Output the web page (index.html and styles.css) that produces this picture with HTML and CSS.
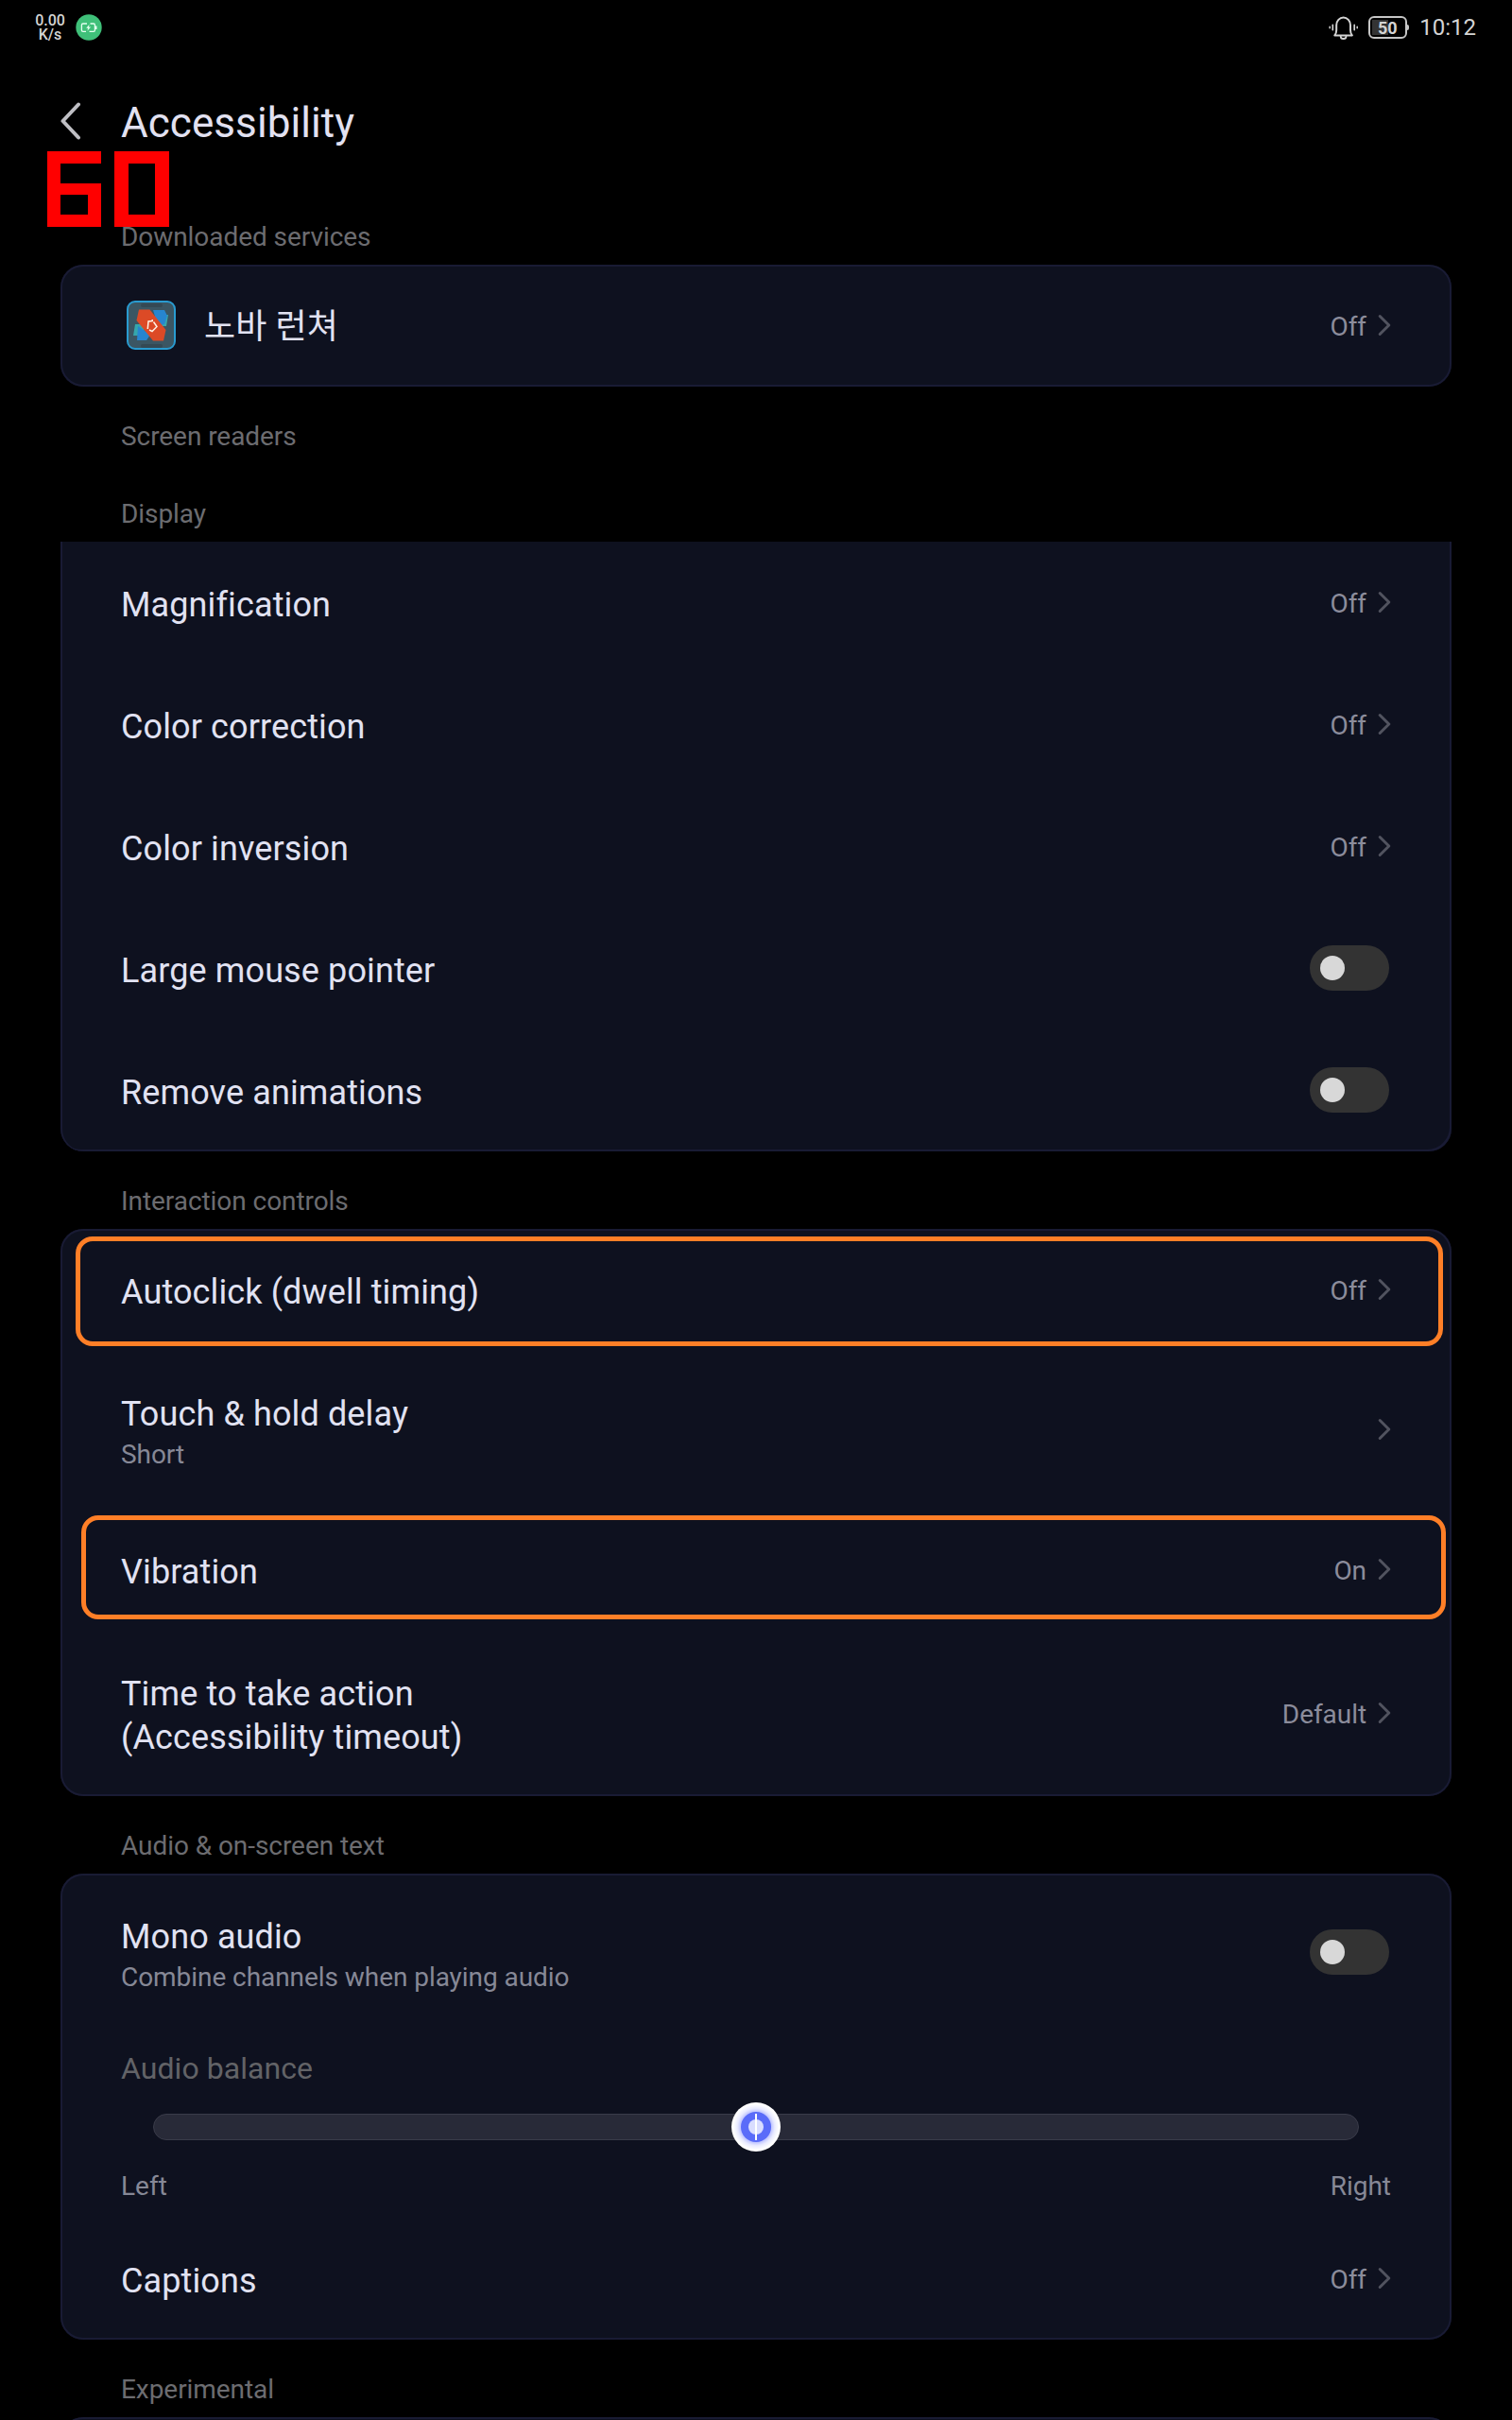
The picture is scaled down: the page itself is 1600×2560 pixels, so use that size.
FILE: index.html
```html
<!DOCTYPE html>
<html lang="en">
<head>
<meta charset="utf-8">
<title>Accessibility</title>
<link rel="stylesheet" href="styles.css">
</head>
<body>
<svg class="symbols" aria-hidden="true">
  <symbol id="chevron" viewBox="0 0 14 24"><path d="M2.2 2.5 11.8 12 2.2 21.5" fill="none" stroke="currentColor" stroke-width="3" stroke-linecap="round" stroke-linejoin="round"/></symbol>
</svg>
<div class="screen">
  <div class="status-bar">
    <div class="status-left">
      <div class="net-speed"><span>0.00</span><span>K/s</span></div>
      <svg class="charge-badge" viewBox="0 0 28 28">
        <circle cx="14" cy="14" r="13.7" fill="#3fc079"/>
        <path d="M12 10H8Q6.400 10 6.400 11.500V17Q6.400 18.400 8 18.400H11M15.500 10H19Q20.400 10 20.400 11.500V17Q20.400 18.400 19 18.400H14.500" fill="none" stroke="#e4fff0" stroke-width="1.300"/>
        <path d="M21 12.400h1.500v3.700H21z" fill="#e4fff0"/>
        <path d="M14.600 10.800 11.200 14.700h2l-.8 3 3.700-4.100h-2.200z" fill="#e4fff0"/>
      </svg>
    </div>
    <div class="status-right">
      <svg class="bell" viewBox="0 0 32 28" fill="none" stroke="#d4d4d4" stroke-linecap="round">
        <path d="M6.300 22.400Q8.200 20.500 8.200 17V11.500A7.400 8 0 0 1 23 11.500V17Q23 20.500 24.900 22.400Z" stroke-width="2" stroke-linejoin="round"/>
        <path d="M12.700 23.400a2.900 2.600 0 0 0 5.800 0" stroke-width="1.800"/>
        <path d="M4.300 11.400v5.200M27.200 11.400v5.200" stroke-width="1.700"/>
        <path d="M1.200 13.300v1.500M30.200 13.300v1.500" stroke-width="1.500"/>
      </svg>
      <div class="battery">50</div>
      <div class="clock">10:12</div>
    </div>
  </div>

  <header class="app-bar">
    <svg class="back" viewBox="0 0 24 40"><path d="M20 2.500 3.500 20 20 37.500" fill="none" stroke="#bfbfc4" stroke-width="4" stroke-linecap="round" stroke-linejoin="round"/></svg>
    <h1>Accessibility</h1>
    <div class="fps"><span class="digit six">6</span><span class="digit zero">0</span></div>
  </header>

  <h2>Downloaded services</h2>
  <section class="card">
    <div class="row service">
      <svg class="nova" viewBox="0 0 52 52">
        <rect x="1" y="1" width="50" height="50" rx="8" fill="#3b5663" stroke="#299bd0" stroke-width="2"/>
        <rect x="15" y="3" width="23" height="4" rx="2" fill="#344954"/><rect x="15" y="46" width="23" height="4" rx="2" fill="#344954"/>
        <path d="M36 15h8l-2 12h-7zM9 25h8l3 12H7z" fill="#35a6ac"/>
        <path d="M28 10h12l3 6-3 9-7 2zM12 27l13 9-4 6H11z" fill="#2785cf"/>
        <path d="M13 9.500h11.500L41.500 31l-2.500 11.500H28L10.500 21z" fill="#dc4a26"/>
        <path d="M22.300 30 23 22l4.200-.5V20M28.500 22.500 32 27.500 27 32.500l-3-1.500" fill="none" stroke="#fff1e4" stroke-width="1.500"/>
      </svg>
      <div class="label">노바 런쳐</div><div class="value">Off</div><svg class="chev"><use href="#chevron"/></svg>
    </div>
  </section>

  <h2>Screen readers</h2>
  <h2>Display</h2>
  <section class="card open-top">
    <div class="row"><div class="label">Magnification</div><div class="value">Off</div><svg class="chev"><use href="#chevron"/></svg></div>
    <div class="row"><div class="label">Color correction</div><div class="value">Off</div><svg class="chev"><use href="#chevron"/></svg></div>
    <div class="row"><div class="label">Color inversion</div><div class="value">Off</div><svg class="chev"><use href="#chevron"/></svg></div>
    <div class="row"><div class="label">Large mouse pointer</div><div class="toggle"></div></div>
    <div class="row"><div class="label">Remove animations</div><div class="toggle"></div></div>
  </section>

  <h2>Interaction controls</h2>
  <section class="card">
    <div class="row"><div class="label">Autoclick (dwell timing)</div><div class="value">Off</div><svg class="chev"><use href="#chevron"/></svg><div class="mark mark-autoclick"></div></div>
    <div class="row"><div class="label">Touch &amp; hold delay<small>Short</small></div><svg class="chev"><use href="#chevron"/></svg></div>
    <div class="row"><div class="label">Vibration</div><div class="value">On</div><svg class="chev"><use href="#chevron"/></svg><div class="mark mark-vibration"></div></div>
    <div class="row"><div class="label">Time to take action<br>(Accessibility timeout)</div><div class="value">Default</div><svg class="chev"><use href="#chevron"/></svg></div>
  </section>

  <h2>Audio &amp; on-screen text</h2>
  <section class="card">
    <div class="row"><div class="label">Mono audio<small>Combine channels when playing audio</small></div><div class="toggle"></div></div>
    <div class="balance">
      <div class="balance-title">Audio balance</div>
      <div class="track"><svg class="thumb" viewBox="0 0 52 52">
        <defs><radialGradient id="halo"><stop offset=".6" stop-color="#b8beff"/><stop offset=".76" stop-color="#e9ebff"/><stop offset=".93" stop-color="#fff"/></radialGradient></defs>
        <circle cx="26" cy="26" r="26" fill="url(#halo)"/><circle cx="26" cy="26" r="16" fill="#5a6cf9"/><circle cx="26" cy="26" r="8" fill="#d9ddff"/><path d="M25 12h2v28h-2z" fill="#fff"/>
      </svg></div>
      <div class="ends"><span>Left</span><span>Right</span></div>
    </div>
    <div class="row"><div class="label">Captions</div><div class="value">Off</div><svg class="chev"><use href="#chevron"/></svg></div>
  </section>

  <h2>Experimental</h2>
  <section class="card"><div class="row"></div></section>
</div>
</body>
</html>
```
FILE: styles.css
```css
* { box-sizing: border-box; }

html, body { margin: 0; background: #000; }

.symbols { display: none; }

.screen {
  width: 1600px;
  height: 2560px;
  overflow: hidden;
  background: #000;
  font-family: Roboto, "Noto Sans CJK KR", sans-serif;
}

.status-bar {
  display: flex;
  justify-content: space-between;
  height: 58px;
  padding: 0 37px;
  color: #d4d4d4;
}

.status-left, .status-right { display: flex; align-items: center; }

.net-speed {
  display: flex;
  flex-direction: column;
  width: 32px;
  text-align: center;
  font-size: 16px;
  line-height: 15px;
  font-weight: 500;
}

.charge-badge { width: 28px; height: 28px; margin-left: 11px; }

.bell { width: 32px; height: 28px; margin-right: 10px; }

.battery {
  position: relative;
  width: 41px;
  height: 24px;
  margin-right: 13px;
  border: 2px solid #c6c6c6;
  border-radius: 6px;
  padding-right: 1px;
  background: linear-gradient(#333, #333) 2px 2px / 17px 16px no-repeat;
  font-size: 18px;
  font-weight: 700;
  line-height: 21px;
  text-align: center;
}

.battery::after {
  content: "";
  position: absolute;
  right: -4px;
  top: 7px;
  width: 3px;
  height: 6px;
  border-radius: 0 2px 2px 0;
  background: #c6c6c6;
}

.clock { font-size: 24px; line-height: 28px; padding: 0 1px 0 0; }

.app-bar {
  position: relative;
  display: flex;
  height: 140px;
  padding: 50px 0 0 63px;
}

.back { width: 24px; height: 40px; }

h1 {
  margin: -4px 0 0 41px;
  font-size: 44px;
  line-height: 52px;
  font-weight: 400;
  letter-spacing: 0.06px;
  color: #e2e1f1;
}

.fps {
  position: absolute;
  left: 50px;
  top: 102px;
  display: flex;
  gap: 14px;
}

/* Blocky frame-counter digits: the counters are cut out of a solid block. */
.digit {
  width: 57px;
  height: 80px;
  background-color: #f00;
  background-repeat: no-repeat;
  color: transparent;
  font-size: 60px;
  line-height: 80px;
  text-align: center;
}

.six {
  background-image: linear-gradient(#000, #000), linear-gradient(#000, #000);
  background-position: 14px 13px, 14px 46px;
  background-size: 43px 21px, 29px 21px;
}

.zero {
  width: 58px;
  background-image: linear-gradient(#000, #000);
  background-position: 15px 13px;
  background-size: 28px 54px;
}

h2 {
  margin: 0;
  height: 82px;
  padding: 36px 0 0 128px;
  font-size: 28px;
  line-height: 34px;
  font-weight: 400;
  letter-spacing: -0.06px;
  color: #6c6c70;
}

.card {
  margin: 0 64px;
  border-radius: 24px;
  background: #0e111f;
  box-shadow: inset 0 0 0 2px #191b34;
}

.open-top { border-radius: 0 0 24px 24px; clip-path: inset(0); box-shadow: inset 2px 0 #191b34, inset -2px -2px #191b34; }

.row {
  position: relative;
  display: flex;
  align-items: center;
  min-height: 129px;
  padding: 0 64px;
}

.label {
  flex: 1;
  padding: 44px 0 39px;
  font-size: 36px;
  line-height: 46px;
  letter-spacing: 0.12px;
  color: #e1e2f2;
}

.service .label { padding: 43px 0 40px; }

.label small {
  display: block;
  padding-top: 1px;
  margin-bottom: -1px;
  font-size: 28px;
  line-height: 38px;
  letter-spacing: -0.06px;
  color: #868896;
}

.nova { width: 52px; height: 52px; margin: 0 30px 1px 6px; }

.value { font-size: 28px; line-height: 34px; letter-spacing: -0.06px; color: #8b8c9b; padding-top: 3px; }

.chev { width: 14px; height: 24px; margin: 0 0 1px 12px; color: #51535f; }

.toggle {
  width: 84px;
  height: 48px;
  margin: 0 2px 1px 0;
  padding: 11px;
  border-radius: 24px;
  background: #333;
}

.toggle::before {
  content: "";
  display: block;
  width: 26px;
  height: 26px;
  border-radius: 50%;
  background: #d8d8d8;
}

.mark { position: absolute; border: 5px solid #ff7f27; border-radius: 18px; }
.mark-autoclick { left: 16px; right: 9px; top: 8px; height: 116px; }
.mark-vibration { left: 22px; right: 6px; top: 7px; height: 110px; }

.balance { height: 197px; padding: 19px 64px 0; }

.balance-title { font-size: 32px; line-height: 40px; letter-spacing: 0.06px; color: #626367; }

.track {
  display: flex;
  align-items: center;
  justify-content: center;
  height: 28px;
  margin: 28px 34px 0;
  border: 1px solid #393b49;
  border-radius: 14px;
  background: #282a38;
}

.thumb { flex: none; width: 52px; height: 52px; }

.ends {
  display: flex;
  justify-content: space-between;
  margin-top: 32px;
  font-size: 28px;
  line-height: 34px;
  color: #868896;
}
```
